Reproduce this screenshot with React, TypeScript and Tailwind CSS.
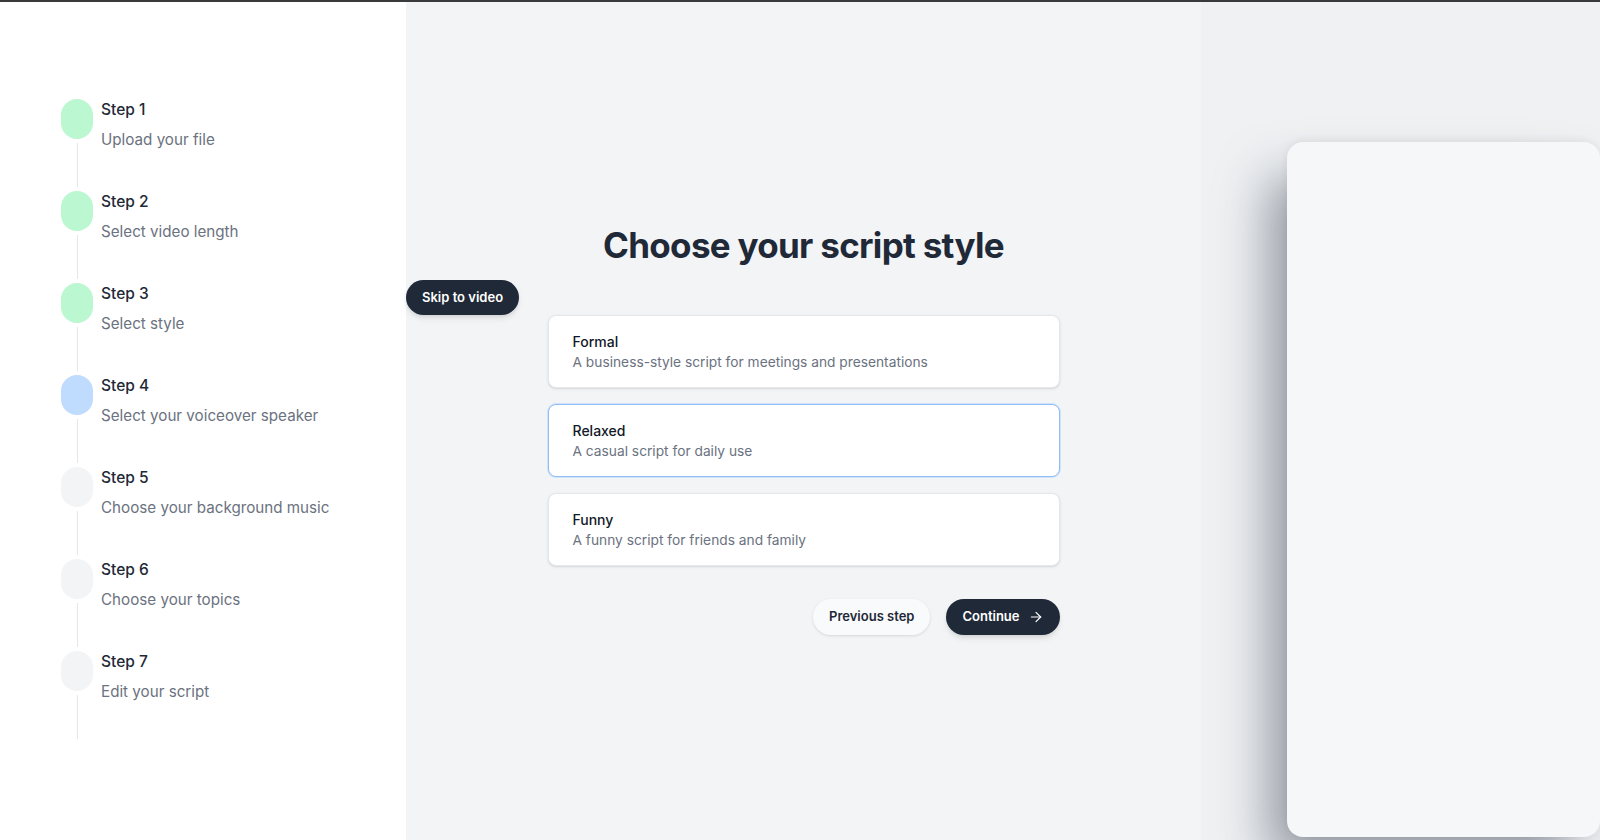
import React from "react";
import { ArrowRight } from "lucide-react";

type Step = { title: string; desc: string; state: "done" | "current" | "todo" };

const steps: Step[] = [
  { title: "Step 1", desc: "Upload your file", state: "done" },
  { title: "Step 2", desc: "Select video length", state: "done" },
  { title: "Step 3", desc: "Select style", state: "done" },
  { title: "Step 4", desc: "Select your voiceover speaker", state: "current" },
  { title: "Step 5", desc: "Choose your background music", state: "todo" },
  { title: "Step 6", desc: "Choose your topics", state: "todo" },
  { title: "Step 7", desc: "Edit your script", state: "todo" },
];

const options = [
  { title: "Formal", desc: "A business-style script for meetings and presentations", selected: false },
  { title: "Relaxed", desc: "A casual script for daily use", selected: true },
  { title: "Funny", desc: "A funny script for friends and family", selected: false },
];

function StepItem({ step }: { step: Step }) {
  const dot =
    step.state === "done"
      ? "bg-[#bbf7d0]"
      : step.state === "current"
      ? "bg-[#bfdbfe]"
      : "bg-[#f3f4f6]";
  return (
    <div className="flex gap-2">
      <div className="flex w-8 flex-col items-center">
        <div className={`h-10 w-8 rounded-full ${dot}`} />
        <div className="my-1 w-px flex-1 bg-[#e5e7eb]" />
      </div>
      <div className="pb-[39px]">
        <div className="-mt-[1px] text-[15.5px] leading-6 font-medium text-[#1f2937]">{step.title}</div>
        <div className="mt-[6px] text-[15.2px] leading-6 text-[#6b7280]">{step.desc}</div>
      </div>
    </div>
  );
}

export default function App() {
  return (
    <div
      className="relative flex h-[840px] w-[1600px] overflow-hidden bg-white"
      style={{ fontFamily: "Inter, 'Noto Sans', sans-serif" }}
    >
      <div className="absolute inset-x-0 top-0 z-20 h-[2px] bg-[#3a3a3a]" />

      {/* Sidebar */}
      <aside className="flex w-[406px] shrink-0 flex-col justify-center bg-white pl-[61px] pt-[2px]">
        {steps.map((s) => (
          <StepItem key={s.title} step={s} />
        ))}
      </aside>

      {/* Main */}
      <main className="flex w-[795px] shrink-0 flex-col bg-[#f3f4f6] pt-[225px]">
        <h1 className="text-center text-[35px] leading-10 font-bold tracking-[-0.02em] text-[#1f2937]">
          Choose your script style
        </h1>
        <div className="mt-[15px] flex">
          <button className="h-[35px] rounded-full bg-[#1f2937] px-4 text-[13px] font-semibold text-white shadow-md">
            Skip to video
          </button>
        </div>
        <div className="mx-auto mt-0 flex w-[512px] flex-col gap-4">
          {options.map((o) => (
            <div
              key={o.title}
              className={`rounded-lg bg-white px-6 py-[15.5px] ${
                o.selected
                  ? "border border-[#93bdf5] shadow-[0_0_0_1px_rgba(191,219,254,0.7)]"
                  : "border border-[#e5e7eb] shadow-sm"
              }`}
            >
              <div className="text-sm leading-5 font-medium text-[#111827]">{o.title}</div>
              <div className="text-[13.75px] leading-5 text-[#6b7280]">{o.desc}</div>
            </div>
          ))}
          <div className="mt-[17px] flex justify-end gap-4">
            <button className="h-9 rounded-full bg-[#f9fafb] px-4 text-[13px] font-semibold text-[#1f2937] shadow-[0_1px_3px_rgba(0,0,0,0.12)]">
              Previous step
            </button>
            <button className="flex h-9 items-center gap-2 rounded-full bg-[#1f2937] px-4 text-[13px] font-semibold text-white shadow-md">
              Continue
              <ArrowRight size={16} strokeWidth={1.75} />
            </button>
          </div>
        </div>
      </main>

      {/* Right preview panel */}
      <section className="flex flex-1 flex-col bg-[#eff1f3] pl-[86px] pt-[142px] pb-[3px]">
        <div className="flex-1 rounded-[16px] bg-[#f5f7f9] shadow-[-24px_30px_50px_-6px_rgba(55,65,81,0.5),0_-2px_8px_rgba(0,0,0,0.06)]" />
      </section>
    </div>
  );
}
